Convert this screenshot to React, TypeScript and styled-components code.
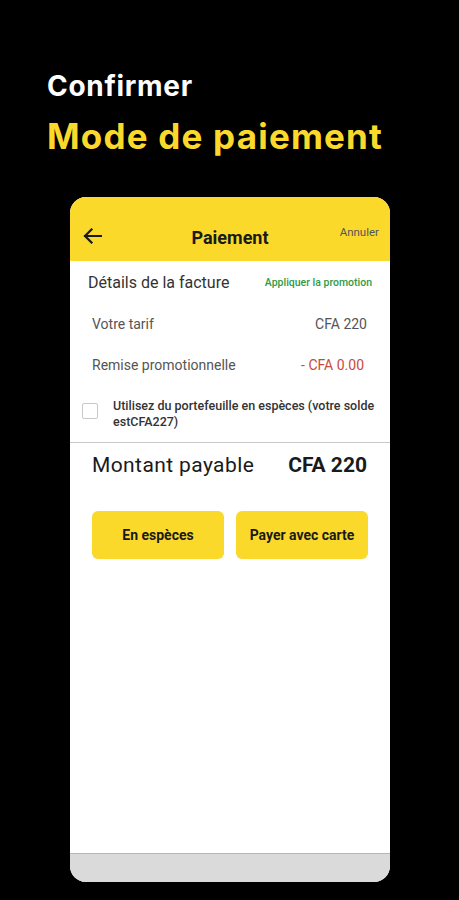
import React from "react";
import styled, { createGlobalStyle } from "styled-components";

const Global = createGlobalStyle`
  html, body { margin: 0; padding: 0; background: #000; }
  body { width: 459px; height: 900px; overflow: hidden; }
  * { box-sizing: border-box; }
`;

const Page = styled.div`
  width: 459px;
  height: 900px;
  background: #000;
  display: flex;
  flex-direction: column;
  padding-top: 68px;
`;

const Headline = styled.div`
  padding-left: 47px;
  display: flex;
  flex-direction: column;
  font-family: "Inter", "Liberation Sans", sans-serif;
  font-weight: 700;
`;

const Kicker = styled.div`
  color: #fff;
  font-size: 28px;
  line-height: 36px;
  letter-spacing: 0.7px;
`;

const Title = styled.div`
  color: #fbd92b;
  font-size: 35px;
  line-height: 44px;
  margin-top: 10px;
  letter-spacing: 1.2px;
`;

const Phone = styled.div`
  margin: 39px 0 0 70px;
  width: 320px;
  height: 685px;
  background: #fff;
  border-radius: 16px;
  overflow: hidden;
  display: flex;
  flex-direction: column;
  font-family: "Roboto", "Liberation Sans", sans-serif;
`;

const Header = styled.div`
  height: 64px;
  background: #fbd92b;
  position: relative;
  display: flex;
  align-items: center;
  justify-content: center;
`;

const Back = styled.div`
  position: absolute;
  left: 13px;
  top: 31px;
  display: flex;
`;

const HeaderTitle = styled.div`
  font-size: 18px;
  font-weight: 700;
  color: #1a1a1a;
  margin-top: 16px;
`;

const Cancel = styled.div`
  position: absolute;
  right: 11px;
  top: 28px;
  font-size: 11.5px;
  color: #555;
`;

const Content = styled.div`
  flex: 1;
  display: flex;
  flex-direction: column;
`;

const Row = styled.div<{ $h: number; $pl: number; $pr: number }>`
  height: ${(p) => p.$h}px;
  padding: 0 ${(p) => p.$pr}px 0 ${(p) => p.$pl}px;
  display: flex;
  align-items: center;
  justify-content: space-between;
`;

const SectionTitle = styled.div`
  font-size: 16px;
  color: #333;
`;

const Promo = styled.div`
  font-size: 10.5px;
  font-weight: 500;
  color: #2f9a45;
`;

const Label = styled.div`
  font-size: 14px;
  color: #555;
`;

const Value = styled.div<{ $red?: boolean }>`
  font-size: 14px;
  color: ${(p) => (p.$red ? "#c9493c" : "#555")};
`;

const CheckRow = styled.div`
  display: flex;
  align-items: flex-start;
  padding: 13px 12px 0 12px;
  height: 57px;
`;

const Box = styled.div`
  width: 16px;
  height: 16px;
  border: 1.5px solid #c9c9c9;
  border-radius: 2px;
  margin-top: 5px;
  flex-shrink: 0;
`;

const CheckText = styled.div`
  margin-left: 15px;
  font-size: 12.5px;
  line-height: 16px;
  font-weight: 500;
  color: #333;
`;

const Divider = styled.div`
  height: 1px;
  background: #c8c8c8;
`;

const Total = styled.div`
  font-size: 21px;
  font-weight: 400;
  color: #1a1a1a;
  letter-spacing: 0.4px;
`;

const TotalValue = styled.div`
  font-size: 21px;
  font-weight: 700;
  color: #1a1a1a;
`;

const Buttons = styled.div`
  display: grid;
  grid-template-columns: 132px 132px;
  gap: 12px;
  padding: 0 0 0 22px;
  margin-top: 24px;
`;

const Button = styled.div`
  height: 48px;
  border-radius: 6px;
  background: #fbd92b;
  display: flex;
  align-items: center;
  justify-content: center;
  font-size: 14px;
  font-weight: 700;
  color: #1a1a1a;
`;

const BottomBar = styled.div`
  height: 29px;
  background: #dadada;
  border-top: 1.5px solid #b5b5b5;
`;

export default function App() {
  return (
    <Page>
      <Global />
      <Headline>
        <Kicker>Confirmer</Kicker>
        <Title>Mode de paiement</Title>
      </Headline>
      <Phone>
        <Header>
          <Back>
            <svg width="19" height="16" viewBox="0 0 19 16" fill="none">
              <path d="M18 8H2M8.5 1.5L2 8l6.5 6.5" stroke="#1a1a1a" strokeWidth="2.2" strokeLinecap="square" />
            </svg>
          </Back>
          <HeaderTitle>Paiement</HeaderTitle>
          <Cancel>Annuler</Cancel>
        </Header>
        <Content>
          <Row $h={42} $pl={18} $pr={18}>
            <SectionTitle>Détails de la facture</SectionTitle>
            <Promo>Appliquer la promotion</Promo>
          </Row>
          <Row $h={42} $pl={22} $pr={23}>
            <Label>Votre tarif</Label>
            <Value>CFA 220</Value>
          </Row>
          <Row $h={40} $pl={22} $pr={26}>
            <Label>Remise promotionnelle</Label>
            <Value $red>- CFA 0.00</Value>
          </Row>
          <CheckRow>
            <Box />
            <CheckText>
              Utilisez du portefeuille en espèces (votre solde
              <br />
              estCFA227)
            </CheckText>
          </CheckRow>
          <Divider />
          <Row $h={44} $pl={22} $pr={23}>
            <Total>Montant payable</Total>
            <TotalValue>CFA 220</TotalValue>
          </Row>
          <Buttons>
            <Button>En espèces</Button>
            <Button>Payer avec carte</Button>
          </Buttons>
        </Content>
        <BottomBar />
      </Phone>
    </Page>
  );
}
